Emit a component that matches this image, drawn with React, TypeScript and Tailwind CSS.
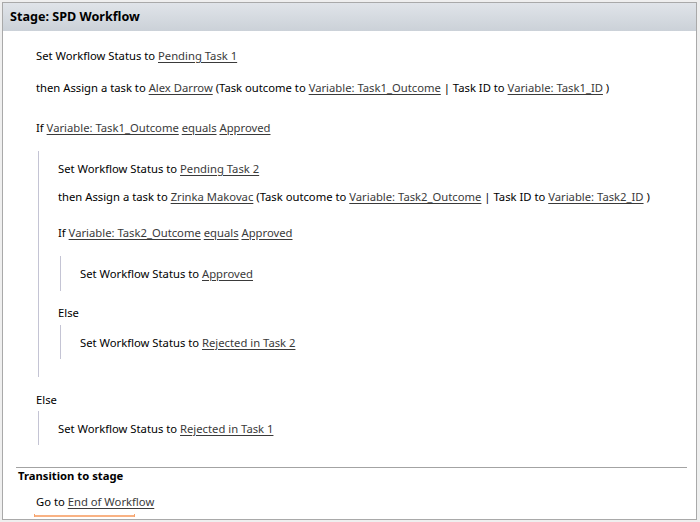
const L = ({ children }: { children: React.ReactNode }) => (
  <span className="text-[#3a3a3a] underline decoration-[#3a3a3a] underline-offset-2">{children}</span>
)

const Row = ({ children, className = '' }: { children: React.ReactNode; className?: string }) => (
  <div className={`h-5 leading-5 whitespace-nowrap ${className}`}>{children}</div>
)

const Branch = ({ children, className = '' }: { children: React.ReactNode; className?: string }) => (
  <div className={`border-l border-[#c4c4d4] pl-[19px] ${className}`}>{children}</div>
)

const App = () => {
  return (
    <div
      className="h-[522px] w-[700px] bg-[#efefef] pl-[2px] pt-[2px] text-[11.25px] text-black"
      style={{ fontFamily: '"Segoe UI", "Noto Sans", sans-serif' }}
    >
      <div className="h-[518px] w-[695px] border border-[#a9a9a9] bg-white">
        <div className="flex h-[28px] items-center bg-gradient-to-b from-[#e0e4e9] to-[#cbd1d8] pb-px pl-[7px] pt-px text-[12.6px] font-bold">
          Stage: SPD Workflow
        </div>

        <div className="pt-[15px]">
          <div className="pl-[33px]">
            <Row>
              Set Workflow Status to <L>Pending Task 1</L>
            </Row>
            <Row className="mt-3">
              then Assign a task to <L>Alex Darrow</L> (Task outcome to <L>Variable: Task1_Outcome</L> | Task ID to{' '}
              <L>Variable: Task1_ID</L> )
            </Row>
            <Row className="mt-5">
              If <L>Variable: Task1_Outcome</L> <L>equals</L> <L>Approved</L>
            </Row>
          </div>

          <Branch className="ml-[35px] mt-[13px] pb-[18px] pt-2">
            <Row>
              Set Workflow Status to <L>Pending Task 2</L>
            </Row>
            <Row className="mt-2">
              then Assign a task to <L>Zrinka Makovac</L> (Task outcome to <L>Variable: Task2_Outcome</L> | Task ID to{' '}
              <L>Variable: Task2_ID</L> )
            </Row>
            <Row className="mt-4">
              If <L>Variable: Task2_Outcome</L> <L>equals</L> <L>Approved</L>
            </Row>
            <Branch className="ml-[2px] mt-[13px] pb-[7px] pt-2">
              <Row>
                Set Workflow Status to <L>Approved</L>
              </Row>
            </Branch>
            <Row className="mt-3">Else</Row>
            <Branch className="ml-[2px] mt-[2px] pb-[6px] pt-2">
              <Row>
                Set Workflow Status to <L>Rejected in Task 2</L>
              </Row>
            </Branch>
          </Branch>

          <Row className="ml-[33px] mt-[13px]">Else</Row>
          <Branch className="ml-[35px] mt-[1px] pb-[6px] pt-2">
            <Row>
              Set Workflow Status to <L>Rejected in Task 1</L>
            </Row>
          </Branch>

          <div className="ml-[13px] mr-[9px] mt-[22px] h-px bg-[#a3a3a3]" />
          <div className="h-4 pl-[15px] font-bold leading-4">Transition to stage</div>
          <Row className="ml-[33px] mt-2">
            Go to <L>End of Workflow</L>
          </Row>
          <div className="ml-[31px] mt-[2px] flex h-[3px] w-[101px] items-center justify-between">
            <div className="h-[3px] w-px bg-[#f6a36b]" />
            <div className="h-[2px] flex-1 bg-[#f9b283]" />
            <div className="h-[3px] w-px bg-[#f6a36b]" />
          </div>
        </div>
      </div>
    </div>
  )
}

export default App
